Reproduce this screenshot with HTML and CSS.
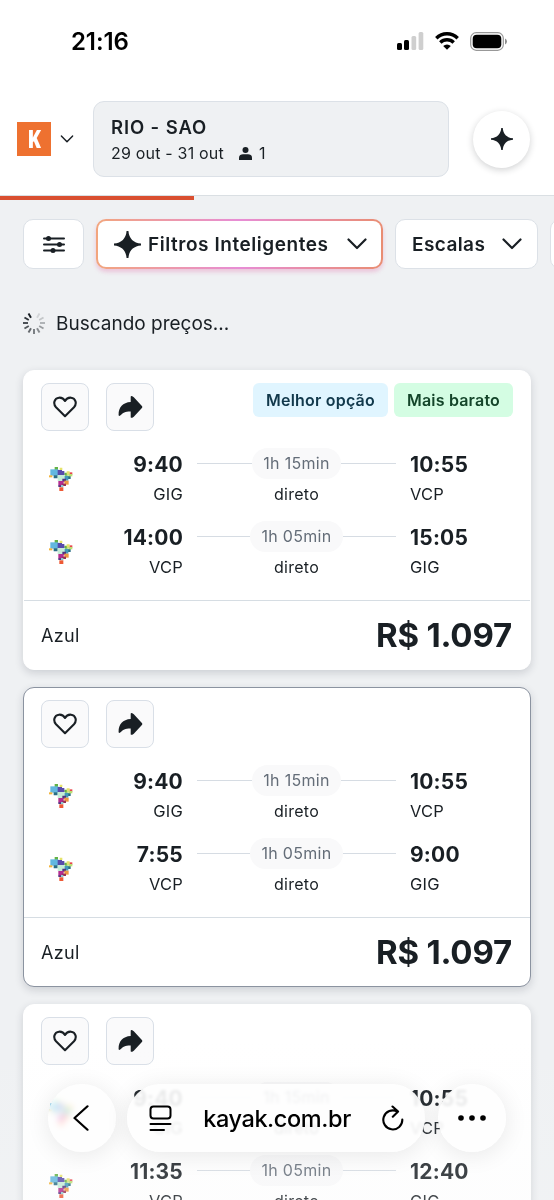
FILE: index.html
```
<!DOCTYPE html>
<html lang="pt-BR">
<head>
<meta charset="utf-8">
<meta name="viewport" content="width=device-width, initial-scale=1">
<title>RIO - SAO</title>
<link rel="stylesheet" href="styles.css">
</head>
<body>
<svg class="defs" aria-hidden="true">
  <symbol id="heart" viewBox="0 0 24 24"><path d="M12 21.200 3 12.300C-.2 8.700 1.200 3.200 6 2.700c2.600-.2 4.800 1.100 6 3.300 1.200-2.200 3.400-3.500 6-3.300 4.800.5 6.200 6 3 9.600Z" fill="none" stroke="#191f24" stroke-width="2.100" stroke-linejoin="round"/></symbol>
  <symbol id="share" viewBox="0 0 24 22"><path d="M12.200.8Q12.300-.3 13.800.3L15.300 1.200 23.400 10Q24.200 11 23.400 12L15.300 20.800 13.800 21.700Q12.300 22.200 12.200 21.200V15.400C7 15.300 4.500 16.400 1.700 19.600.8 20.400.2 20 .1 19-.1 12 4 6.500 12.200 6.100Z" fill="#191f24"/></symbol>
  <symbol id="spark" viewBox="0 0 26 26"><path d="M12.100 0h1.800C14.400 7.200 18.800 11.600 26 12.100v1.800C18.800 14.400 14.400 18.800 13.900 26h-1.800C11.600 18.800 7.200 14.400 0 13.900v-1.800C7.200 11.600 11.600 7.200 12.100 0Z" fill="#191f24"/></symbol>
  <symbol id="chev" viewBox="0 0 20 12"><path d="m1.500 1.500 8.500 8.500 8.500-8.500" fill="none" stroke="#191f24" stroke-width="2.200" stroke-linecap="round" stroke-linejoin="round"/></symbol>
  <symbol id="azul" viewBox="0 0 72 72">
    <path fill="#63b246" d="M17 0h10v9H17zM46 17h10v9H46z"/><path fill="#e5e36b" d="M32 2h8v8h-8zM53 13h9v10h-9z"/>
    <path fill="#62b7df" d="M4 7h24v19H4z"/><path fill="#574bab" d="M26 9h13v15H26zM38 12h8v12h-8z"/>
    <path fill="#f1b43c" d="M0 25h10v6H0z"/><path fill="#286e84" d="M14 25h12v9H14zM56 27h9v9h-9z"/>
    <path fill="#c4ecd7" d="M26 24h22v18H26z"/><path fill="#4299b9" d="M47 27h11v14H47z"/>
    <path fill="#e8454b" d="M62 16h8v7h-8z"/><path fill="#b7de72" d="M58 21h12v7H58z"/>
    <path fill="#503481" d="M40 35h11v9H40zM28 54h9v6h-9z"/><path fill="#b32d90" d="M28 42h16v13H28z"/>
    <path fill="#ee9842" d="M46 41h13v12H46z"/><path fill="#983152" d="M40 50h11v7H40z"/><path fill="#8fced1" d="M36 54h7v7h-7z"/><path fill="#ee5935" d="M31 61h12v11H31z"/>
  </symbol>
</svg>

<div class="screen">
  <header class="top">
    <div class="status">
      <span class="clock">21:16</span>
      <div class="indicators">
        <svg width="27" height="18" viewBox="0 0 27 18"><rect x="0" y="11" width="5" height="7" rx="1.500"/><rect x="7" y="8" width="5" height="10" rx="1.500"/><g fill="#cfcfcf"><rect x="14.500" y="4" width="4.700" height="14" rx="1.500"/><rect x="21.600" y="0" width="4.700" height="18" rx="1.500"/></g></svg>
        <svg width="24" height="18" viewBox="0 0 24 18"><g fill="none" stroke="#000" stroke-width="3.400"><path d="M1.300 6.200a15.200 15.200 0 0 1 21.400 0"/><path d="M5.300 10.500a9.500 9.500 0 0 1 13.400 0"/></g><path d="M12 17.800 8.200 14a5.300 5.300 0 0 1 7.600 0Z"/></svg>
        <svg width="37" height="19" viewBox="0 0 37 19"><rect x=".7" y=".7" width="32.600" height="17.600" rx="5.500" fill="none" stroke="#989898" stroke-width="1.200"/><rect x="2.700" y="2.700" width="28.600" height="13.600" rx="4"/><path d="M35 6.500q2 .8 2 3t-2 3Z" fill="#8c8c8c"/></svg>
      </div>
    </div>
    <div class="nav">
      <div class="logo"><span>K</span></div>
      <svg class="logo-chev" viewBox="0 0 20 12"><use href="#chev"/></svg>
      <div class="search">
        <div class="route">RIO - SAO</div>
        <div class="dates"><span>29 out - 31 out</span>
          <svg width="13" height="13" viewBox="0 0 13 13"><circle cx="6.500" cy="3" r="3" fill="#191f24"/><path d="M0 13v-2.500C0 8.500 2 7.300 4 7.300h5c2 0 4 1.200 4 3.200V13Z" fill="#191f24"/></svg>
          <span>1</span></div>
      </div>
      <div class="ai"><svg width="22" height="22"><use href="#spark"/></svg></div>
    </div>
  </header>
  <div class="progress"></div>

  <div class="filters">
    <div class="chip chip-icon"><svg width="22" height="17" viewBox="0 0 22 17"><path d="M1 2.500h20M1 8.500h20M1 14.500h20" stroke="#191f24" stroke-width="2" stroke-linecap="round"/><g fill="#191f24"><circle cx="5.500" cy="2.500" r="2.500"/><circle cx="16.500" cy="8.500" r="2.500"/><circle cx="10" cy="14.500" r="2.500"/></g></svg></div>
    <div class="chip chip-smart"><svg width="27" height="27"><use href="#spark"/></svg><span class="smart-label">Filtros Inteligentes</span><svg class="chip-chev" viewBox="0 0 20 12"><use href="#chev"/></svg></div>
    <div class="chip chip-stops"><span class="stops-label">Escalas</span><svg class="chip-chev" viewBox="0 0 20 12"><use href="#chev"/></svg></div>
    <div class="chip chip-next"></div>
  </div>

  <div class="loading">
    <svg width="24" height="24" viewBox="-12 -12 24 24" stroke="#191f24" stroke-width="1.900"><path d="M0-6v-5" transform="rotate(-30)"/><path d="M0-6v-5" transform="rotate(-60)" opacity=".9"/><path d="M0-6v-5" transform="rotate(-90)" opacity=".8"/><path d="M0-6v-5" transform="rotate(-120)" opacity=".72"/><path d="M0-6v-5" transform="rotate(-150)" opacity=".64"/><path d="M0-6v-5" transform="rotate(180)" opacity=".56"/><path d="M0-6v-5" transform="rotate(150)" opacity=".48"/><path d="M0-6v-5" transform="rotate(120)" opacity=".4"/><path d="M0-6v-5" transform="rotate(90)" opacity=".3"/><path d="M0-6v-5" transform="rotate(60)" opacity=".2"/><path d="M0-6v-5" transform="rotate(30)" opacity=".13"/></svg>
    <span>Buscando preços...</span>
  </div>

  <main class="results">
    <article class="card">
      <div class="actions">
        <div class="btn"><svg width="24" height="24"><use href="#heart"/></svg></div>
        <div class="btn"><svg width="25" height="22"><use href="#share"/></svg></div>
        <div class="tags"><span class="tag best">Melhor opção</span><span class="tag cheap">Mais barato</span></div>
      </div>
      <div class="leg"><svg class="airline"><use href="#azul"/></svg>
        <div class="dep"><div class="time">9:40</div><div class="code">GIG</div></div>
        <div class="mid"><div class="track"><span class="dur">1h 15min</span></div><div class="stops">direto</div></div>
        <div class="arr"><div class="time">10:55</div><div class="code">VCP</div></div></div>
      <div class="leg"><svg class="airline"><use href="#azul"/></svg>
        <div class="dep"><div class="time">14:00</div><div class="code">VCP</div></div>
        <div class="mid"><div class="track"><span class="dur">1h 05min</span></div><div class="stops">direto</div></div>
        <div class="arr"><div class="time">15:05</div><div class="code">GIG</div></div></div>
      <div class="foot"><span class="name">Azul</span><span class="price">R$ 1.097</span></div>
    </article>

    <article class="card selected">
      <div class="actions">
        <div class="btn"><svg width="24" height="24"><use href="#heart"/></svg></div>
        <div class="btn"><svg width="25" height="22"><use href="#share"/></svg></div>
      </div>
      <div class="leg"><svg class="airline"><use href="#azul"/></svg>
        <div class="dep"><div class="time">9:40</div><div class="code">GIG</div></div>
        <div class="mid"><div class="track"><span class="dur">1h 15min</span></div><div class="stops">direto</div></div>
        <div class="arr"><div class="time">10:55</div><div class="code">VCP</div></div></div>
      <div class="leg"><svg class="airline"><use href="#azul"/></svg>
        <div class="dep"><div class="time">7:55</div><div class="code">VCP</div></div>
        <div class="mid"><div class="track"><span class="dur">1h 05min</span></div><div class="stops">direto</div></div>
        <div class="arr"><div class="time">9:00</div><div class="code">GIG</div></div></div>
      <div class="foot"><span class="name">Azul</span><span class="price">R$ 1.097</span></div>
    </article>

    <article class="card">
      <div class="actions">
        <div class="btn"><svg width="24" height="24"><use href="#heart"/></svg></div>
        <div class="btn"><svg width="25" height="22"><use href="#share"/></svg></div>
      </div>
      <div class="leg"><svg class="airline"><use href="#azul"/></svg>
        <div class="dep"><div class="time">9:40</div><div class="code">GIG</div></div>
        <div class="mid"><div class="track"><span class="dur">1h 15min</span></div><div class="stops">direto</div></div>
        <div class="arr"><div class="time">10:55</div><div class="code">VCP</div></div></div>
      <div class="leg"><svg class="airline"><use href="#azul"/></svg>
        <div class="dep"><div class="time">11:35</div><div class="code">VCP</div></div>
        <div class="mid"><div class="track"><span class="dur">1h 05min</span></div><div class="stops">direto</div></div>
        <div class="arr"><div class="time">12:40</div><div class="code">GIG</div></div></div>
    </article>
  </main>

  <div class="haze"></div>
  <div class="browser">
    <div class="glass round see-through"><svg class="back" width="16" height="26" viewBox="0 0 16 26"><path d="M14.500 1.300 1.500 13l13 11.700" fill="none" stroke="#000" stroke-width="2.200" stroke-linecap="round" stroke-linejoin="round"/></svg></div>
    <div class="glass bar">
      <svg width="23" height="27" viewBox="0 0 23 27" fill="none" stroke="#000" stroke-width="2"><rect x="1.500" y="1.500" width="20" height="12" rx="3"/><path d="M1.500 19h20M1.500 25h13.500" stroke-linecap="round"/></svg>
      <span class="url">kayak.com.br</span>
      <svg width="22" height="27" viewBox="0 0 22 27" fill="none" stroke="#000" stroke-width="2.100" stroke-linecap="round" stroke-linejoin="round"><path d="M20.300 14.500A9.500 9.500 0 1 1 15.400 6.600M10.500 1.500l5.600 5-5.300 5.200"/></svg>
    </div>
    <div class="glass round more"><svg width="28" height="6" viewBox="0 0 28 6"><circle cx="3" cy="3" r="2.800"/><circle cx="14" cy="3" r="2.800"/><circle cx="25" cy="3" r="2.800"/></svg></div>
  </div>
</div>
</body>
</html>
```
FILE: styles.css
```
* { box-sizing: border-box; }
body { margin: 0; font-family: Inter, "Liberation Sans", sans-serif; color: #191f24; background: #eff1f3; }
svg { display: block; flex: none; }
.defs { position: absolute; width: 0; height: 0; }
.screen { position: relative; width: 554px; height: 1200px; overflow: hidden; background: #eff1f3; }

.top { height: 196px; background: #fff; border-bottom: 1px solid #dadfe3; }
.status { display: flex; justify-content: space-between; align-items: center; height: 82px; padding: 0 47px 0 71px; }
.clock { font-size: 24px; font-weight: 600; letter-spacing: -.1px; color: #000; white-space: nowrap; }
.indicators { display: flex; align-items: center; gap: 11px; }
.nav { display: flex; align-items: center; height: 114px; padding: 0 24px 0 17px; }
.logo { display: flex; align-items: center; justify-content: center; width: 34px; height: 34px; background: #ee7130; color: #fff; font: 800 24px/1 "Open Sans", sans-serif; }
.logo span { transform: scaleX(.82); }
.logo-chev { width: 14px; height: 8px; margin-left: 9px; }
.search { width: 357px; height: 76px; margin-left: 19px; padding: 13px 18px 0 17px; border: 1px solid #dce1e7; border-radius: 11px; background: #eff1f3; }
.route { font-size: 18.500px; font-weight: 600; line-height: 24px; letter-spacing: .9px; white-space: nowrap; }
.dates { display: flex; align-items: center; margin-top: 2px; font-size: 16px; line-height: 25px; letter-spacing: .2px; white-space: nowrap; }
.dates svg { margin: 0 7px 0 15px; }
.ai { display: flex; align-items: center; justify-content: center; width: 57px; height: 57px; margin-left: 24px; border-radius: 50%; background: #fff; box-shadow: 0 2px 7px rgba(25,31,36,.2); }
.progress { width: 194px; height: 4px; background: #d94f30; }

.filters { display: flex; gap: 12px; margin-top: 19px; padding-left: 23px; }
.chip { display: flex; flex: none; align-items: center; height: 50px; border: 1px solid #dce1e7; border-radius: 10px; background: #fff; font-size: 19px; font-weight: 600; white-space: nowrap; }
.chip-icon { width: 61px; justify-content: center; }
.chip-smart { width: 287px; padding: 0 14px 0 16px; border: 2px solid transparent; background: linear-gradient(#fff, #fff) padding-box, linear-gradient(90deg, #f2a57d, #e78dd5 50%, #e98d72) border-box; box-shadow: 0 3px 4px rgba(230,130,180,.4); }
.smart-label { margin-left: 7px; letter-spacing: .55px; }
.stops-label { letter-spacing: .4px; }
.chip-stops { width: 143px; padding: 0 15px 0 16px; }
.chip-next { width: 100px; }
.chip-chev { width: 20px; height: 12px; margin-left: auto; }

.loading { display: flex; align-items: center; height: 30px; margin: 39px 0 32px 22px; gap: 10px; font-size: 19px; letter-spacing: 0; white-space: nowrap; }

.results { display: flex; flex-direction: column; gap: 17px; padding: 0 23px; }
.card { display: flex; flex-direction: column; flex: none; height: 300px; border: 1px solid #fff; border-radius: 11px; background: #fff; box-shadow: 0 3px 8px rgba(25,31,50,.16); }
.selected { border-color: #8b93a0; }
.actions { display: flex; height: 48px; margin: 12px 17px 17px; gap: 17px; }
.btn { display: flex; flex: none; align-items: center; justify-content: center; width: 48px; height: 48px; border: 1px solid #d9dfe7; border-radius: 8px; background: #fafafb; }
.tags { display: flex; gap: 6px; margin-left: auto; }
.tag { display: flex; align-items: center; justify-content: center; height: 34px; border-radius: 6px; font-size: 16px; font-weight: 600; letter-spacing: .2px; white-space: nowrap; }
.best { width: 135px; background: #e0f5ff; color: #11384b; }
.cheap { width: 119px; background: #d4fde3; color: #14452a; }
.leg { display: grid; grid-template-columns: 40px 102px 198px 1fr; column-gap: 0; height: 61px; margin: 0 17px 12px; align-items: center; }
.airline { width: 24px; height: 24px; margin-left: 8px; }
.dep { text-align: right; }
.mid { width: 199px; margin-left: 14px; }
.arr { margin-left: 29px; }
.time { height: 31px; font-size: 21px; font-weight: 700; line-height: 33px; letter-spacing: .2px; white-space: nowrap; }
.code, .stops { font-size: 16px; line-height: 30px; white-space: nowrap; }
.code { font-size: 16.500px; letter-spacing: .2px; }
.stops { text-align: center; letter-spacing: .3px; }
.track { display: flex; align-items: center; height: 31px; }
.track::before, .track::after { content: ""; flex: 1; height: 1px; background: #d6dce3; }
.dur { padding: 0 11px; border-radius: 16px; background: #f9f9fa; color: #646d78; font-size: 16px; line-height: 31px; letter-spacing: .3px; white-space: nowrap; }
.foot { display: flex; align-items: center; justify-content: space-between; height: 70px; margin-top: 6px; padding: 0 18px 0 17px; border-top: 1px solid #d6dde3; }
.name { font-size: 18px; letter-spacing: .3px; }
.price { font-size: 33px; font-weight: 700; letter-spacing: -.2px; white-space: nowrap; }

.haze { position: absolute; inset: 1040px 0 0; background: linear-gradient(transparent, rgba(246,247,248,.2)); }
.browser { position: absolute; left: 48px; top: 1084px; display: flex; }
.glass { display: flex; align-items: center; height: 68px; border-radius: 34px; background: rgba(254,254,254,.9); backdrop-filter: blur(1.500px); box-shadow: 0 3px 24px rgba(0,0,0,.09); }
.round { width: 68px; justify-content: center; }
.see-through { background: rgba(254,254,254,.72); backdrop-filter: blur(3px) saturate(1.800); }
.back { margin-right: 3px; }
.bar { width: 298px; margin: 0 13px 0 11px; padding: 0 21px 0 22px; justify-content: space-between; }
.url { font-size: 23.500px; font-weight: 500; letter-spacing: -.4px; color: #000; white-space: nowrap; }
```
